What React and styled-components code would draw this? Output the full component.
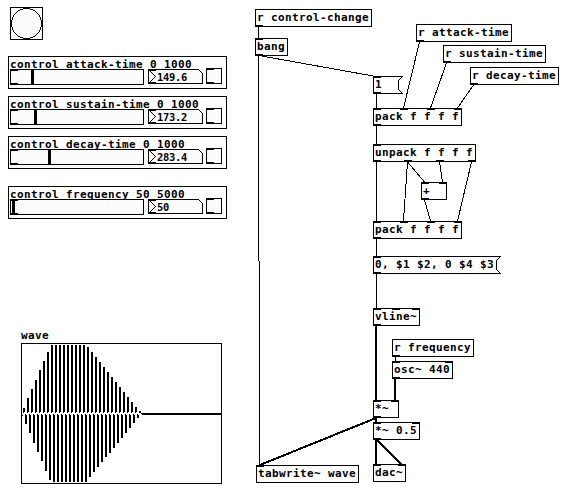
import React from "react";
import styled, { createGlobalStyle } from "styled-components";

const Global = createGlobalStyle`
  body { margin: 0; background: #fff; }
  * { box-sizing: border-box; }
`;

const Canvas = styled.main`
  position: relative;
  width: 569px;
  height: 492px;
  overflow: hidden;
  background: #fff;
  color: #000;
  font: bold 11px/13px "DejaVu Sans Mono", monospace;
  letter-spacing: 0.378px;
  white-space: pre;
`;

const Cords = styled.svg`
  position: absolute;
  inset: 0;
  fill: none;
  stroke: #000;
  shape-rendering: crispEdges;
`;

/* An item at its own place on the free patch canvas. */
const Placed = styled.div`
  position: absolute;
  left: ${(p) => p.$x}px;
  top: ${(p) => p.$y}px;
`;

const ObjectBox = styled(Placed)`
  width: ${(p) => p.$w}px;
  height: 18px;
  padding: ${(p) => (p.$message ? "2px 0 0 2px" : "1px 0 0 1px")};
  border: ${(p) => (p.$message ? "0" : "1px solid #000")};
`;

const ObjectText = styled.span`
  display: block;
`;

const Port = styled.i`
  position: absolute;
  left: ${(p) => p.$x}px;
  ${(p) => (p.$out ? "bottom" : "top")}: ${(p) => p.$edge}px;
  width: 8px;
  height: 2px;
  background: #000;
`;

const Outline = styled.svg`
  position: absolute;
  inset: 0;
  fill: none;
  stroke: #000;
  shape-rendering: crispEdges;
`;

const BangButton = styled(Placed)`
  width: 33px;
  height: 33px;
  border: 1px solid #000;
  background: #fcfcfc;
`;

const Drawing = styled.svg`
  display: block;
  shape-rendering: crispEdges;
`;

const ControlList = styled(Placed)`
  display: flex;
  flex-direction: column;
  gap: 7px;
`;

const ControlPanel = styled.section`
  width: 219px;
  height: 33px;
  padding: 1px 0 0 1px;
  border: 1px solid #000;

  &:last-child {
    margin-top: 10px;
  }
`;

const ControlLabel = styled.div`
  height: 10px;
`;

const ControlRow = styled.div`
  position: relative;
  display: flex;
  align-items: flex-start;
`;

const Slider = styled.div`
  position: relative;
  width: 134px;
  height: 16px;
  margin-top: 1px;
  border: 1px solid #000;
  background: #fcfcfc;
`;

const Thumb = styled.i`
  display: block;
  width: 3px;
  height: 14px;
  background: #000;
`;

const NumberBox = styled.div`
  position: relative;
  width: 55px;
  height: 15px;
  margin: 1px 0 0 4px;
  padding: 2px 0 0 9px;
`;

const NumberText = styled.span`
  position: relative;
  display: block;
  font-size: 10.4px;
  line-height: 13px;
  letter-spacing: -0.26px;
`;

const Toggle = styled.div`
  position: relative;
  width: 16px;
  height: 16px;
  margin-left: 3px;
  border: 1px solid #000;
  background: #fcfcfc;
`;

const ArrayLabel = styled.div`
  height: 14px;
`;

const ArrayFrame = styled.div`
  width: 201px;
  height: 141px;
  border: 1px solid #000;
`;

const controls = [
  { label: "control attack-time 0 1000", value: "149.6", thumb: 20 },
  { label: "control sustain-time 0 1000", value: "173.2", thumb: 23 },
  { label: "control decay-time 0 1000", value: "283.4", thumb: 37 },
  { label: "control frequency 50 5000", value: "50", thumb: 1 },
];

const objects = [
  { x: 255, y: 9, w: 117, text: "r control-change", outs: 1 },
  { x: 255, y: 38, w: 33, text: "bang", ins: 1, outs: 1 },
  { x: 416, y: 24, w: 96, text: "r attack-time", outs: 1 },
  { x: 443, y: 45, w: 103, text: "r sustain-time", outs: 1 },
  { x: 470, y: 67, w: 89, text: "r decay-time", outs: 1 },
  { x: 373, y: 76, w: 30, text: "1", ins: 1, outs: 1, message: true },
  { x: 373, y: 108, w: 89, text: "pack f f f f", ins: 4, outs: 1 },
  { x: 373, y: 144, w: 103, text: "unpack f f f f", ins: 1, outs: 4 },
  { x: 421, y: 182, w: 26, text: "+", ins: 2, outs: 1 },
  { x: 373, y: 221, w: 89, text: "pack f f f f", ins: 4, outs: 1 },
  { x: 373, y: 256, w: 128, text: "0, $1 $2, 0 $4 $3", ins: 1, outs: 1, message: true },
  { x: 373, y: 308, w: 47, text: "vline~", ins: 3, outs: 1 },
  { x: 392, y: 339, w: 82, text: "r frequency", outs: 1 },
  { x: 392, y: 361, w: 61, text: "osc~ 440", ins: 2, outs: 1 },
  { x: 373, y: 400, w: 26, text: "*~", ins: 2, outs: 1 },
  { x: 373, y: 422, w: 47, text: "*~ 0.5", ins: 2, outs: 1 },
  { x: 373, y: 464, w: 33, text: "dac~", ins: 2 },
  { x: 256, y: 465, w: 103, text: "tabwrite~ wave", ins: 1 },
];

const controlCords = [
  [258.5, 27, 258.5, 38],
  [258.5, 56, 258.5, 261],
  [259.5, 261, 259.5, 465],
  [259, 55.5, 376, 76.5],
  [419.5, 42, 403.5, 108],
  [446.5, 63, 430.5, 108],
  [473.5, 85, 457.5, 108],
  [376.5, 94, 376.5, 108],
  [376.5, 126, 376.5, 144],
  [376.5, 162, 376.5, 221],
  [407.5, 162, 403.5, 221],
  [407.5, 162, 424.5, 182],
  [439.5, 162, 442.5, 182],
  [424.5, 200, 430.5, 221],
  [471.5, 162, 457.5, 221],
  [376.5, 239, 376.5, 256],
  [376.5, 274, 376.5, 308],
  [395.5, 357, 395.5, 361],
];

const signalCords = [
  [376, 326, 376, 400],
  [395, 379, 395, 400],
  [376, 418, 376, 422],
  [376, 418, 260, 465],
  [376, 440, 376, 464],
  [376, 439, 402, 465],
];

const crests = [
  408, 398, 389, 380, 370, 361, 352, 345, 345, 345, 345, 345, 345, 345, 345, 345,
  347, 352, 357, 362, 367, 372, 377, 382, 387, 392, 397, 402, 407, 411,
].map((y) => y - 344);

const troughs = [
  424, 433, 443, 452, 461, 471, 480, 482, 482, 482, 482, 482, 482, 482, 482, 482,
  477, 472, 467, 462, 457, 453, 448, 443, 438, 433, 428, 423, 418,
].map((y) => y - 344);

function Ports({ count = 0, width, out, edge }) {
  return Array.from({ length: count }, (_, i) => (
    <Port
      key={i}
      $out={out}
      $edge={edge}
      $x={edge + (count > 1 ? Math.floor(((width - 8) * i) / (count - 1)) : 0)}
    />
  ));
}

function PatchObject({ x, y, w, text, ins, outs, message }) {
  const edge = message ? 0 : -1;
  return (
    <ObjectBox $x={x} $y={y} $w={w} $message={message}>
      {message && (
        <Outline width={w} height="18">
          <path d={`M${w - 0.5} .5H.5V17.5H${w - 0.5}L${w - 4.5} 13.5V4.5Z`} />
        </Outline>
      )}
      <ObjectText>{text}</ObjectText>
      <Ports count={ins} width={w} edge={edge} />
      <Ports count={outs} width={w} edge={edge} out />
    </ObjectBox>
  );
}

function Control({ label, value, thumb }) {
  return (
    <ControlPanel>
      <ControlLabel>{label}</ControlLabel>
      <ControlRow>
        <Slider>
          <Thumb style={{ marginLeft: thumb }} />
          <Ports count={1} edge={-1} />
          <Ports count={1} edge={-1} out />
        </Slider>
        <NumberBox>
          <Outline width="55" height="15">
            <path fill="#fcfcfc" d="M.5 .5H50.5L54.5 4.5V14.5H.5Z" />
            <path d="M.5 .5L7.5 7.5L.5 14.5" />
          </Outline>
          <Ports count={1} edge={0} />
          <Ports count={1} edge={0} out />
          <NumberText>{value}</NumberText>
        </NumberBox>
        <Toggle>
          <Ports count={1} edge={-1} />
          <Ports count={1} edge={-1} out />
        </Toggle>
      </ControlRow>
    </ControlPanel>
  );
}

export default function App() {
  return (
    <>
      <Global />
      <Canvas>
        <Cords width="569" height="492">
          {controlCords.map(([x1, y1, x2, y2], i) => (
            <line key={i} x1={x1} y1={y1} x2={x2} y2={y2} />
          ))}
          {signalCords.map(([x1, y1, x2, y2], i) => (
            <line key={i} x1={x1} y1={y1} x2={x2} y2={y2} strokeWidth="2" />
          ))}
        </Cords>
        <BangButton $x={10} $y={7}>
          <Drawing width="31" height="31">
            <circle cx="15.5" cy="15.5" r="15" fill="none" stroke="#000" />
          </Drawing>
        </BangButton>
        <ControlList $x={8} $y={56}>
          {controls.map((c) => (
            <Control key={c.label} {...c} />
          ))}
        </ControlList>
        {objects.map((o) => (
          <PatchObject key={`${o.x}-${o.y}`} {...o} />
        ))}
        <Placed $x={21} $y={329}>
          <ArrayLabel>wave</ArrayLabel>
          <ArrayFrame>
            <Drawing width="199" height="139">
              {crests.map((y, i) => (
                <path key={i} d={`M${1 + 4 * i} ${y}h2V68h-1v1h-1Z`} />
              ))}
              {troughs.map((y, i) => (
                <path key={i} d={`M${3 + 4 * i} ${y}h2V71h-1v-1h-1Z`} />
              ))}
              <rect x="0" y="71" width="1" height="1" />
              <path d="M118 68h1v1h1v1h-1v-1h-1Z" />
              <rect x="120" y="69" width="79" height="2" />
            </Drawing>
          </ArrayFrame>
        </Placed>
      </Canvas>
    </>
  );
}
